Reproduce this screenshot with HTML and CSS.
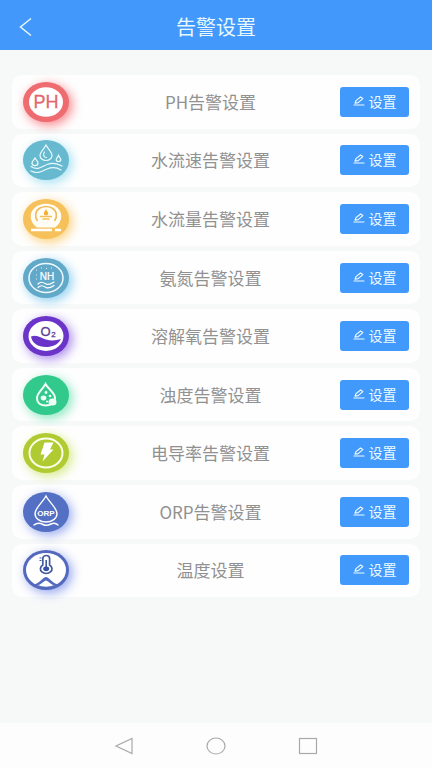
FILE: index.html
```html
<!DOCTYPE html>
<html lang="zh-CN">
<head>
<meta charset="utf-8">
<meta name="viewport" content="width=device-width, initial-scale=1">
<title>告警设置</title>
<link rel="stylesheet" href="styles.css">
</head>
<body>
<svg class="defs" aria-hidden="true">
  <symbol id="edit" viewBox="0 0 12 10">
    <path d="M2 7.200 L3 4.600 L7.500 1 L9.800 2.600 L5.200 6.600 Z M1 9 H11" fill="none" stroke="currentColor" stroke-width="1.200" stroke-linejoin="round" stroke-linecap="round"/>
  </symbol>
</svg>
<header class="topbar">
  <button class="back" type="button" aria-label="返回">
    <svg width="14" height="20" viewBox="0 0 14 20"><path d="M12 1.500 L1.500 10 L12 18.500" fill="none" stroke="currentColor" stroke-width="1.500"/></svg>
  </button>
  <h1 class="title">告警设置</h1>
</header>
<main class="content">
  <ul class="list">
    <li class="card">
      <svg class="icon icon-ph" viewBox="0 0 46 40" aria-hidden="true">
        <ellipse cx="23" cy="20" rx="17" ry="14.800" fill="#fff"/>
        <text class="glyph" x="23" y="26" font-size="18" fill="#e2686f" stroke="#e2686f" stroke-width=".3">PH</text>
      </svg>
      <span class="label">PH告警设置</span>
      <button class="set" type="button"><svg class="pen"><use href="#edit"/></svg>设置</button>
    </li>
    <li class="card">
      <svg class="icon icon-speed" viewBox="0 0 46 40" aria-hidden="true">
        <g fill="none" stroke="#e8fbff" stroke-width="1.200" stroke-linecap="round">
          <path d="M23 5 C21 9 17 12 17 15.500 A6 5 0 0 0 29 15.500 C29 12 25 9 23 5 Z"/>
          <path d="M21.500 12 C19.500 15 21 17.500 23.500 17.500"/>
          <path d="M12 18 C11 20 9 21 9 23 A3 2.600 0 0 0 15 23 C15 21 13 20 12 18 Z"/>
          <path d="M35.500 15.500 C35 17 33.200 18 33.200 19.500 A2.300 2 0 0 0 37.800 19.500 C37.800 18 36 17 35.500 15.500 Z"/>
          <path d="M8 26.500 C15 31 19 26.500 24 24.500 C29 22.500 34 23 39 26"/>
          <path d="M8 31 C15 34.500 19 31 24 29 C29 27 34 27.500 38 30"/>
        </g>
      </svg>
      <span class="label">水流速告警设置</span>
      <button class="set" type="button"><svg class="pen"><use href="#edit"/></svg>设置</button>
    </li>
    <li class="card">
      <svg class="icon icon-flow" viewBox="0 0 46 40" aria-hidden="true">
        <path d="M14 28.500 C6 23 6 13 12 8.500 C18 3.500 28 3.500 34 8.500 C40 13 40 23 32 28.500 Z" fill="#fffdf4"/>
        <path d="M14.500 22 C11 17 12.500 11.500 17 9 C21 7 25 7 29 9 C33.500 11.500 35 17 31.500 22" fill="none" stroke="#eebb5c" stroke-width="1.600"/>
        <path d="M23 10 C22 12.500 20.800 13 20.800 14.500 A2.200 2 0 0 0 25.200 14.500 C25.200 13 24 12.500 23 10 Z" fill="#f4ad35"/>
        <path d="M17.500 17.500 H28.500 M20 20 H26" stroke="#f4bf55" stroke-width="1.400" stroke-linecap="round"/>
        <path d="M8 31 H29 M32 31 H38" stroke="#fff" stroke-width="2.400"/>
      </svg>
      <span class="label">水流量告警设置</span>
      <button class="set" type="button"><svg class="pen"><use href="#edit"/></svg>设置</button>
    </li>
    <li class="card">
      <svg class="icon icon-nh" viewBox="0 0 46 40" aria-hidden="true">
        <ellipse cx="23" cy="20" rx="17" ry="14.500" fill="none" stroke="#eefaff" stroke-width="1.500"/>
        <text class="glyph" x="24" y="22" font-size="10" fill="#fff" stroke="#fff" stroke-width=".2">NH</text>
        <g fill="none" stroke="#fff" stroke-width="1.200" stroke-linecap="round">
          <path d="M15 26 C18 23 20 24.500 23 26 S28 26 31 24"/>
          <path d="M15 29.500 C18 26.500 20 28 23 29.500 S28 29.500 31 27.500"/>
        </g>
        <path d="M13 12 h1 M18 10 h1 M23 10.500 h1 M28 10 h1 M13 17 h1 M13 21 h1" stroke="#d9f3ff"/>
      </svg>
      <span class="label">氨氮告警设置</span>
      <button class="set" type="button"><svg class="pen"><use href="#edit"/></svg>设置</button>
    </li>
    <li class="card">
      <svg class="icon icon-o2" viewBox="0 0 46 40" aria-hidden="true">
        <ellipse cx="23" cy="20" rx="17.500" ry="15" fill="#fff"/>
        <path d="M8 20.500 C14 18 18 22 23 23.500 C29 25.500 34 24 38 23 C35 29 29 31 23 31 C15 31 9 27 8 20.500 Z" fill="#6b34c9"/>
        <text class="glyph" x="22.500" y="19.500" font-size="13" fill="#5d3c98" stroke="#5d3c98" stroke-width=".3">O</text>
        <text class="glyph" x="30.500" y="21" font-size="8" fill="#5d3c98" stroke="#5d3c98" stroke-width=".3">2</text>
      </svg>
      <span class="label">溶解氧告警设置</span>
      <button class="set" type="button"><svg class="pen"><use href="#edit"/></svg>设置</button>
    </li>
    <li class="card">
      <svg class="icon icon-turbid" viewBox="0 0 46 40" aria-hidden="true">
        <path d="M22.500 9 C20 14 14 17.500 14 23 C14 28 18 30.500 22.500 30.500 C28 30.500 32 28 32 23 C32 17.500 25 14 22.500 9 Z" fill="none" stroke="#f2fff8" stroke-width="2"/>
        <g fill="#f2fff8"><ellipse cx="20.500" cy="23" rx="2.800" ry="2.400"/><circle cx="23" cy="17.500" r="1.400"/><circle cx="27" cy="21" r="1.300"/><circle cx="24" cy="26.500" r="1"/><ellipse cx="29.500" cy="27" rx="4" ry="3.500"/></g>
      </svg>
      <span class="label">浊度告警设置</span>
      <button class="set" type="button"><svg class="pen"><use href="#edit"/></svg>设置</button>
    </li>
    <li class="card">
      <svg class="icon icon-cond" viewBox="0 0 46 40" aria-hidden="true">
        <ellipse cx="23" cy="20" rx="16.500" ry="14.500" fill="none" stroke="#fbffe9" stroke-width="2"/>
        <path d="M21.500 9.500 H30.500 L27 16.500 H30.500 L19.500 28.500 L21.500 21.500 H17.500 Z" fill="#fff"/>
      </svg>
      <span class="label">电导率告警设置</span>
      <button class="set" type="button"><svg class="pen"><use href="#edit"/></svg>设置</button>
    </li>
    <li class="card">
      <svg class="icon icon-orp" viewBox="0 0 46 40" aria-hidden="true">
        <g fill="none" stroke="#fff" stroke-width="1.400" stroke-linecap="round">
          <path d="M23 4 C20 10 12 16 12 21.500 C12 26.500 17 30 23 30 S34 26.500 34 21.500 C34 16 26 10 23 4 Z"/>
          <path d="M11 33 C14 30.500 17 31 20 32.500 S25 33.500 28 32 S33 31 35 33"/>
        </g>
        <text class="glyph glyph-bold" x="23" y="24" font-size="8" fill="#fff">ORP</text>
      </svg>
      <span class="label">ORP告警设置</span>
      <button class="set" type="button"><svg class="pen"><use href="#edit"/></svg>设置</button>
    </li>
    <li class="card">
      <svg class="icon icon-temp" viewBox="0 0 46 40" aria-hidden="true">
        <ellipse cx="23" cy="20" rx="20" ry="17" fill="#fff"/>
        <path d="M11 34.500 C17 33 20 27 23 27 S29 33 35 34.500 L23 38.500 Z" fill="#5369bd"/>
        <path d="M15 35 C19 34.500 21 30.500 23 30.500 S27 34.500 31 35 C26 37.300 20 37.300 15 35 Z" fill="#fff"/>
        <path d="M19.800 15 V8.500 A3.400 3 0 0 1 26.600 8.500 V15 A5.800 4.700 0 1 1 19.800 15 Z" fill="none" stroke="#43599f" stroke-width="1.700"/>
        <path d="M23.200 10 V18" stroke="#43599f" stroke-width="1.600"/>
        <ellipse cx="23.200" cy="18.800" rx="3" ry="2.400" fill="#3550a5"/>
        <path d="M16.500 8 h2 M16.500 10.500 h2" stroke="#43599f"/>
      </svg>
      <span class="label">温度设置</span>
      <button class="set" type="button"><svg class="pen"><use href="#edit"/></svg>设置</button>
    </li>
  </ul>
</main>
<nav class="navbar" aria-label="系统导航">
  <button class="nav" type="button" aria-label="后退"><svg width="20" height="18" viewBox="0 0 20 18"><path d="M18 1.500 V16.500 L2 9 Z"/></svg></button>
  <button class="nav" type="button" aria-label="主页"><svg width="20" height="18" viewBox="0 0 20 18"><ellipse cx="10" cy="9" rx="9" ry="8"/></svg></button>
  <button class="nav" type="button" aria-label="最近任务"><svg width="20" height="18" viewBox="0 0 20 18"><rect x="1.500" y="1.500" width="17" height="15"/></svg></button>
</nav>
</body>
</html>
```
FILE: styles.css
```css
* {
  box-sizing: border-box;
}

body {
  margin: 0;
  min-height: 100vh;
  display: flex;
  flex-direction: column;
  background: #f7f9f9;
  font-family: "Noto Sans CJK SC", sans-serif;
}

button {
  margin: 0;
  padding: 0;
  border: 0;
  background: none;
  font: inherit;
  color: inherit;
}

svg {
  display: block;
}

.defs {
  display: none;
}

.topbar {
  display: grid;
  grid-template-columns: 48px 1fr 48px;
  align-items: center;
  height: 50px;
  padding-top: 4px;
  background: #4298fb;
  color: #e9f8ff;
}

.back {
  padding-left: 19px;
}

.title {
  margin: 0;
  font-size: 20px;
  font-weight: 400;
  line-height: 28px;
  text-align: center;
}

.content {
  flex: 1;
  padding: 25px 12px;
}

.list {
  display: grid;
  grid-auto-rows: 1fr;
  gap: 5px;
  min-height: 68vh;
  margin: 0;
  padding: 0;
  list-style: none;
}

.card {
  display: grid;
  grid-template-columns: 46px 1fr 69px;
  align-items: center;
  padding: 0 11px;
  border-radius: 10px;
  background: #fefefe;
}

.label {
  padding-left: 12px;
  color: #919191;
  font-size: 17px;
  line-height: 24px;
  text-align: center;
}

.set {
  display: flex;
  align-items: center;
  justify-content: center;
  gap: 4px;
  height: 30px;
  border-radius: 3px;
  background: #4099fb;
  color: #effaff;
  font-size: 14px;
  line-height: 20px;
  padding-bottom: 2px;
}

.pen {
  width: 12px;
  height: 10px;
}

.icon {
  width: 46px;
  height: 40px;
  border-radius: 50%;
}

.glyph {
  font-family: "Liberation Sans", sans-serif;
  text-anchor: middle;
}

.glyph-bold {
  font-weight: 700;
}

.icon-ph {
  background: #ee6b70;
  box-shadow: 3px 3px 11px #f98388;
}

.icon-speed {
  background: #67b9cf;
  box-shadow: 3px 3px 11px #a4e0f2;
}

.icon-flow {
  background: #f6c05b;
  box-shadow: 3px 3px 11px #fccf78;
}

.icon-nh {
  background: #62a9c9;
  box-shadow: 3px 3px 11px #8ccff0;
}

.icon-o2 {
  background: #6b34c9;
  box-shadow: 3px 3px 11px #a683ec;
}

.icon-turbid {
  background: #32c98c;
  box-shadow: 3px 3px 11px #82e6bd;
}

.icon-cond {
  background: #b0ca32;
  box-shadow: 3px 3px 11px #d5e883;
}

.icon-orp {
  background: #5470c4;
  box-shadow: 3px 3px 11px #98aaee;
}

.icon-temp {
  background: #5369bd;
  box-shadow: 3px 3px 11px #94a5ee;
}

.navbar {
  display: flex;
  align-items: center;
  justify-content: center;
  gap: 72px;
  height: 45px;
  background: #fdfdfd;
}

.nav svg {
  fill: none;
  stroke: #a9a9a9;
  stroke-width: 1.2;
}
```
